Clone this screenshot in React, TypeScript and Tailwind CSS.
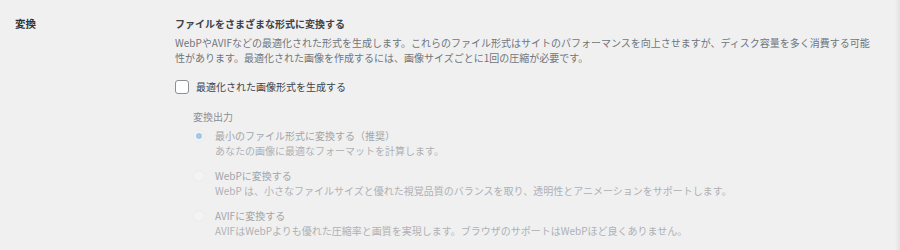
import React from "react";

const font = { fontFamily: '"Noto Sans CJK JP", "Noto Sans", sans-serif' };

type Opt = { label: string; desc: string; checked?: boolean };

const options: Opt[] = [
  { label: "最小のファイル形式に変換する（推奨）", desc: "あなたの画像に最適なフォーマットを計算します。", checked: true },
  {
    label: "WebPに変換する",
    desc: "WebP は、小さなファイルサイズと優れた視覚品質のバランスを取り、透明性とアニメーションをサポートします。",
  },
  {
    label: "AVIFに変換する",
    desc: "AVIFはWebPよりも優れた圧縮率と画質を実現します。ブラウザのサポートはWebPほど良くありません。",
  },
];

const Radio = ({ checked }: { checked?: boolean }) => (
  <span className="mt-[1.5px] flex h-3 w-3 shrink-0 items-center justify-center rounded-full border border-[#ebebec] bg-[#f3f3f4]">
    {checked && <span className="h-[6px] w-[6px] rounded-full bg-[#a3c6e8]" />}
  </span>
);

export default function App() {
  return (
    <div className="flex h-[250px] w-full bg-[#f0f0f1]" style={font}>
      <div className="flex flex-1 pt-4">
        {/* ===== label column ===== */}
        <div className="w-[175px] shrink-0 pl-[15px] text-[10.5px] font-bold leading-4 text-[#2c3338]">変換</div>

        {/* ===== settings ===== */}
        <div className="flex-1 pr-6">
          <h3 className="text-[10px] font-bold leading-4 text-[#3c434a]">ファイルをさまざまな形式に変換する</h3>
          <p className="mt-[3px] text-[10px] leading-[15px] text-[#70757a]">
            WebPやAVIFなどの最適化された形式を生成します。これらのファイル形式はサイトのパフォーマンスを向上させますが、ディスク容量を多く消費する可能性があります。最適化された画像を作成するには、画像サイズごとに1回の圧縮が必要です。
          </p>

          <label className="mt-[14px] flex items-center gap-[7px]">
            <span className="h-[14px] w-[14px] shrink-0 rounded-[3px] border border-[#8c8f94] bg-white" />
            <span className="text-[10px] leading-4 text-[#3c434a]">最適化された画像形式を生成する</span>
          </label>

          <div className="mt-[14px] pl-[18px]">
            <div className="text-[10px] leading-4 text-[#8c8f94]">変換出力</div>
            <div className="mt-[3px] flex flex-col gap-[10px]">
              {options.map((o) => (
                <div key={o.label} className="flex gap-[10px]">
                  <Radio checked={o.checked} />
                  <div>
                    <div className="text-[10px] leading-[15px] text-[#a2a5a8]">{o.label}</div>
                    <div className="text-[10px] leading-[15px] text-[#aeb1b4]">{o.desc}</div>
                  </div>
                </div>
              ))}
            </div>
          </div>
        </div>
      </div>
      <div className="w-[5px] shrink-0 bg-gradient-to-r from-[#f0f0f1] to-[#e2e2e3]" />
    </div>
  );
}
